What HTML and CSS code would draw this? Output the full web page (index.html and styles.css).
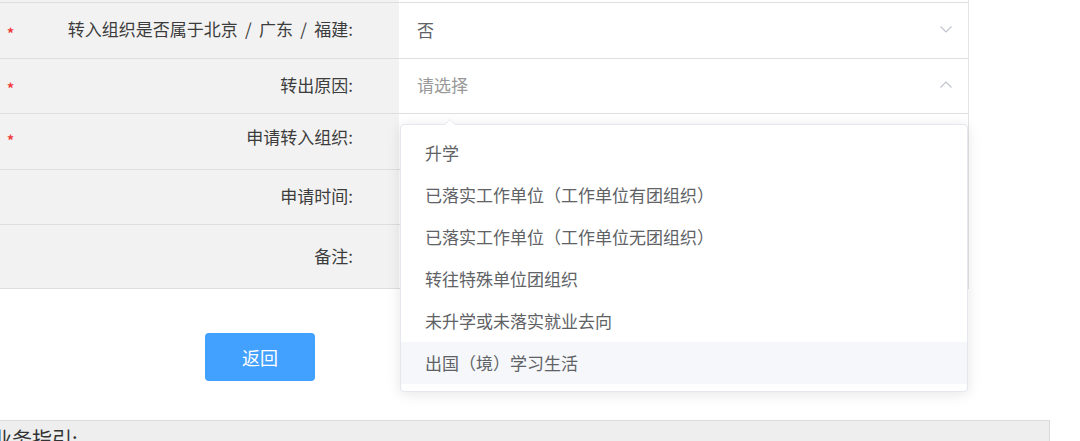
FILE: index.html
```html
<!DOCTYPE html>
<html lang="zh-CN">
<head>
<meta charset="utf-8">
<title>团员组织关系转出申请</title>
<link rel="stylesheet" href="styles.css">
</head>
<body>
<div class="page">
  <div class="form-table">
    <div class="row">
      <div class="label"><span class="req">*</span><span class="label-text">转入组织是否属于北京 / 广东 / 福建:</span></div>
      <div class="value">
        <span class="val-text">否</span>
        <svg class="chev" viewBox="0 0 12 7" width="12" height="7"><path d="M0.5 0.5 L6 6 L11.5 0.5" fill="none" stroke="#c0c4cc" stroke-width="1.2"/></svg>
      </div>
    </div>
    <div class="row">
      <div class="label"><span class="req">*</span><span class="label-text">转出原因:</span></div>
      <div class="value">
        <span class="placeholder">请选择</span>
        <svg class="chev" viewBox="0 0 12 7" width="12" height="7"><path d="M0.5 6.5 L6 1 L11.5 6.5" fill="none" stroke="#c0c4cc" stroke-width="1.2"/></svg>
      </div>
    </div>
    <div class="row row-raised">
      <div class="label"><span class="req">*</span><span class="label-text">申请转入组织:</span></div>
      <div class="value"></div>
    </div>
    <div class="row">
      <div class="label"><span class="label-text">申请时间:</span></div>
      <div class="value"></div>
    </div>
    <div class="row row-tall">
      <div class="label"><span class="label-text">备注:</span></div>
      <div class="value"></div>
    </div>
  </div>

  <div class="actions">
    <button class="btn-primary" type="button">返回</button>
  </div>

  <div class="guide">
    <div class="guide-title">业务指引:</div>
  </div>

  <div class="select-dropdown">
    <span class="popper-arrow"></span>
    <ul class="options">
      <li class="option">升学</li>
      <li class="option">已落实工作单位（工作单位有团组织）</li>
      <li class="option">已落实工作单位（工作单位无团组织）</li>
      <li class="option">转往特殊单位团组织</li>
      <li class="option">未升学或未落实就业去向</li>
      <li class="option hover">出国（境）学习生活</li>
    </ul>
  </div>
</div>
</body>
</html>
```

FILE: styles.css
```css
* {
  box-sizing: border-box;
}

html, body {
  margin: 0;
  padding: 0;
  background: #fff;
  overflow: hidden;
}

body {
  font-family: "Microsoft YaHei", "Noto Sans CJK SC", "Noto Sans", sans-serif;
  color: #333;
}

.page {
  position: relative;
  width: 1080px;
  height: 441px;
}

/* form table: grey label column, white value column */
.form-table {
  width: 969px;
  padding-top: 2px;
  background: linear-gradient(to right, #f2f2f2 399px, #fff 399px);
  border-right: 1px solid #e4e4e4;
}

.row {
  display: grid;
  grid-template-columns: 399px 1fr;
  height: 55.5px;
  border-top: 1px solid #dedede;
}

.row-tall {
  height: 65px;
  border-bottom: 1px solid #dedede;
}

.label {
  display: flex;
  align-items: center;
  justify-content: space-between;
  background: #f2f2f2;
  padding: 0 46px 3px 7px;
  font-size: 17px;
  color: #3c3c3c;
}

.row-raised .label {
  padding-bottom: 10px;
}

.req {
  color: #f03c3c;
  font-size: 14px;
  font-weight: bold;
  line-height: 1;
  padding-top: 8px;
}

.label-text {
  margin-left: auto;
  white-space: nowrap;
  word-spacing: 3.5px;
}

.value {
  display: flex;
  align-items: center;
  justify-content: space-between;
  padding: 0 16px 2px 18px;
  background: #fff;
  font-size: 17px;
}

.val-text {
  color: #606266;
}

.placeholder {
  color: #999;
}

.chev {
  display: block;
}

/* footer actions */
.actions {
  height: 131px;
  display: flex;
  align-items: center;
  padding: 4px 0 0 205px;
  background: #fff;
}

.btn-primary {
  width: 110px;
  height: 48px;
  border: none;
  border-radius: 4px;
  background: #42a0ff;
  color: #fff;
  font-family: inherit;
  font-size: 18px;
}

/* guide box below the form */
.guide {
  margin-left: -20px;
  width: 1070px;
  height: 30px;
  background: #eeeeee;
  border-top: 1px solid #dcdcdc;
  border-right: 1px solid #d8d8d8;
  padding: 3px 0 0 12px;
}

.guide-title {
  font-size: 20px;
  color: #333;
  line-height: 29px;
}

/* select dropdown overlay */
.select-dropdown {
  position: absolute;
  left: 400px;
  top: 124px;
  width: 568px;
  height: 268px;
  background: #fff;
  border: 1px solid #e4e7ed;
  border-radius: 4px;
  box-shadow: 0 2px 14px 0 rgba(0, 0, 0, 0.1);
}

.popper-arrow {
  position: absolute;
  top: -6px;
  left: 43px;
  width: 0;
  height: 0;
  border-left: 6px solid transparent;
  border-right: 6px solid transparent;
  border-bottom: 6px solid #e4e7ed;
}

.popper-arrow::after {
  content: "";
  position: absolute;
  left: -5px;
  top: 1px;
  border-left: 5px solid transparent;
  border-right: 5px solid transparent;
  border-bottom: 5px solid #fff;
}

.options {
  list-style: none;
  margin: 0;
  padding: 7px 0 0;
}

.option {
  height: 42px;
  line-height: 42px;
  padding-left: 24px;
  font-size: 17px;
  color: #606266;
  white-space: nowrap;
}

.option.hover {
  background: #f5f7fa;
}
```
